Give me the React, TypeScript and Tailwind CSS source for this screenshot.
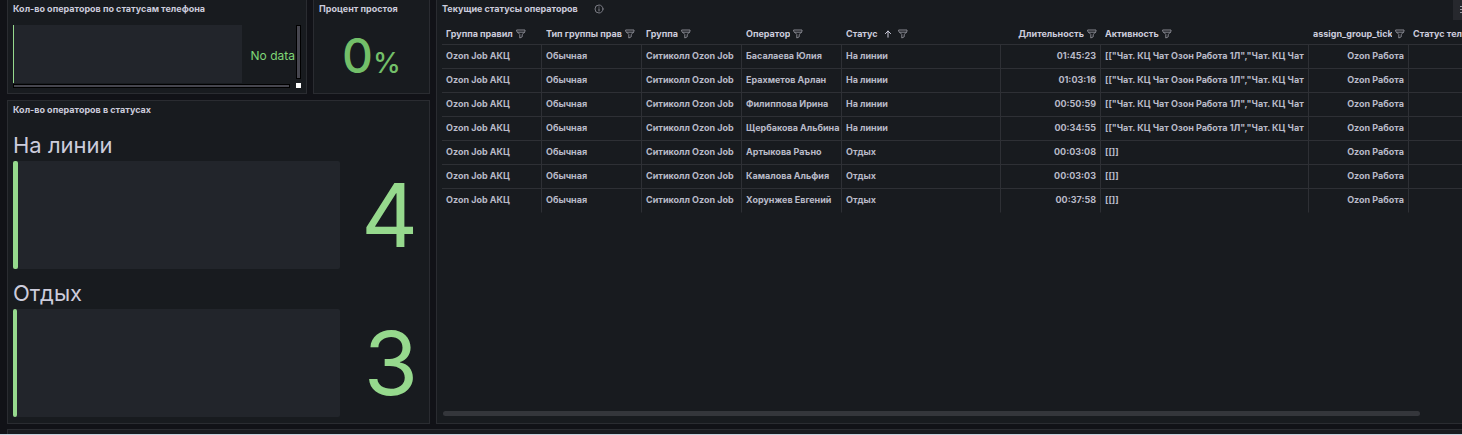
import type { ReactNode } from 'react';
import clsx from 'clsx';

type Column = {
  title: string;
  width: string;
  align?: 'right';
  sorted?: boolean;
};

const columns: Column[] = [
  { title: 'Группа правил', width: 'w-[100px]' },
  { title: 'Тип группы прав', width: 'w-[100px]' },
  { title: 'Группа', width: 'w-[100px]' },
  { title: 'Оператор', width: 'w-[100px]' },
  { title: 'Статус', width: 'w-[159px]', sorted: true },
  { title: 'Длительность', width: 'w-[100px]', align: 'right' },
  { title: 'Активность', width: 'w-[208px]' },
  { title: 'assign_group_ticket', width: 'w-[100px]', align: 'right' },
  { title: 'Статус телефона', width: 'w-[100px]' },
];

const chats = '[["Чат. КЦ Чат Озон Работа 1Л","Чат. КЦ Чат';

const operators = [
  { name: 'Басалаева Юлия', status: 'На линии', duration: '01:45:23', activity: chats },
  { name: 'Ерахметов Арлан', status: 'На линии', duration: '01:03:16', activity: chats },
  { name: 'Филиппова Ирина', status: 'На линии', duration: '00:50:59', activity: chats },
  { name: 'Щербакова Альбина', status: 'На линии', duration: '00:34:55', activity: chats },
  { name: 'Артыкова Раъно', status: 'Отдых', duration: '00:03:08', activity: '[[]]' },
  { name: 'Камалова Альфия', status: 'Отдых', duration: '00:03:03', activity: '[[]]' },
  { name: 'Хорунжев Евгений', status: 'Отдых', duration: '00:37:58', activity: '[[]]' },
];

const FilterIcon = () => (
  <svg viewBox="0 0 10 10" className="w-[10px] h-[10px]" fill="none" stroke="currentColor" strokeWidth="1" strokeLinejoin="round" strokeLinecap="round">
    <path d="M1 1h8v1.6L6.2 5.4v2.4L3.8 9V5.4L1 2.6z" />
    <path d="M1.4 3.2h7.2" />
  </svg>
);

const InfoIcon = () => (
  <svg viewBox="0 0 10 10" className="w-[10px] h-[10px]" fill="none" stroke="currentColor" strokeLinecap="round">
    <circle cx="5" cy="5" r="4" strokeWidth="0.9" />
    <path d="M5 4.8v2.2M5 3v0.2" strokeWidth="1" />
  </svg>
);

const ArrowUp = () => (
  <svg viewBox="0 0 8 8" className="w-2 h-2 shrink-0" fill="none" stroke="currentColor" strokeWidth="1" strokeLinecap="round" strokeLinejoin="round">
    <path d="M4 7.2V1M1.4 3.6L4 1l2.6 2.6" />
  </svg>
);

const Panel = ({ className, children }: { className?: string; children: ReactNode }) => (
  <section className={clsx('border border-[#2a2c31] bg-[#181b1f]', className)}>{children}</section>
);

const Title = ({ children }: { children: ReactNode }) => (
  <h2 className="text-[9px] leading-[18px] font-bold whitespace-nowrap">{children}</h2>
);

const Gauge = ({ label, value, fill }: { label: string; value: number; fill: string }) => (
  <div className="pt-[10px]">
    <h3 className="text-[22px] leading-7">{label}</h3>
    <div className="flex h-[108px] mt-[2px]">
      <div className="flex-1 rounded-xs bg-[#22252b]">
        <div className={clsx('h-full rounded-xs bg-[#96d98d]', fill)} />
      </div>
      <div className="w-[84px] pr-[6px] flex items-center justify-end text-[88px] leading-none text-[#96d98d]">{value}</div>
    </div>
  </div>
);

const StatusTable = () => (
  <table className="table-fixed border-separate border-spacing-0 w-[1067px] text-[9px] font-bold whitespace-nowrap">
    <thead>
      <tr className="h-[21px]">
        {columns.map((col) => (
          <th key={col.title} className={clsx('px-1 border-b border-[#2e3035]', col.width)}>
            <div className={clsx('flex items-center gap-[3px]', col.align === 'right' && 'justify-end')}>
              <span className="overflow-hidden">{col.title}</span>
              {col.sorted && <span className="px-[3px]"><ArrowUp /></span>}
              <button type="button" aria-label={`Фильтр: ${col.title}`} className="shrink-0 text-[#85868e]">
                <FilterIcon />
              </button>
            </div>
          </th>
        ))}
      </tr>
    </thead>
    <tbody className="text-[#b9bac8]">
      {operators.map((op) => (
        <tr key={op.name} className="h-6 *:px-1 *:pb-[2px] *:overflow-hidden *:border-r *:border-b *:border-[#2e3035] last:*:border-b-transparent">
          <td>Ozon Job АКЦ</td>
          <td>Обычная</td>
          <td>Ситиколл Ozon Job</td>
          <td>{op.name}</td>
          <td>{op.status}</td>
          <td className="text-right">{op.duration}</td>
          <td>{op.activity}</td>
          <td className="text-right">Ozon Работа</td>
          <td />
        </tr>
      ))}
    </tbody>
  </table>
);

export default function App() {
  return (
    <main className="bg-[#111217] text-[#ccccdc] font-['Inter',sans-serif] overflow-hidden border-b border-[#c5d0dc]">
      <div className="grid grid-cols-[423px_1fr] gap-[6px] pl-[7px]">
        <div className="flex flex-col gap-[6px]">
          <div className="grid grid-cols-[300px_1fr] gap-[6px]">
            <Panel className="border-t-0 px-[5px] pb-[5px]">
              <Title>Кол-во операторов по статусам телефона</Title>
              <div className="flex h-[58px] mt-[7px] items-stretch">
                <div className="w-[229px] bg-[#22252b] border-l border-[#96d98d]" />
                <div className="flex-1 flex items-center justify-end text-xs text-[#7fd676] pt-1 pr-px">No data</div>
                <div className="w-[5px] h-[54px] bg-[#46464f] border border-black" />
              </div>
              <div className="flex items-center justify-between">
                <div className="w-[277px] h-1 bg-[#46464f] border border-black" />
                <div className="w-[5px] h-[5px] bg-white" />
              </div>
            </Panel>
            <Panel className="border-t-0 px-[5px]">
              <Title>Процент простоя</Title>
              <p className="flex items-baseline justify-center pt-[14px] text-[48px] leading-[48px] font-medium text-[#73bf69]">
                0<span className="text-[28px]">%</span>
              </p>
            </Panel>
          </div>
          <Panel className="px-[5px] pb-[6px]">
            <Title>Кол-во операторов в статусах</Title>
            <div className="pt-[2px]">
              <Gauge label="На линии" value={4} fill="w-[5px]" />
              <Gauge label="Отдых" value={3} fill="w-1" />
            </div>
          </Panel>
        </div>
        <Panel className="relative min-w-0 flex flex-col border-t-0 border-r-0 pl-[5px] overflow-hidden">
          <div className="flex items-center gap-4">
            <Title>Текущие статусы операторов</Title>
            <span className="text-[#85868e]"><InfoIcon /></span>
          </div>
          <div className="mt-[6px] overflow-hidden">
            <StatusTable />
          </div>
          <div className="mt-auto mb-[7px] ml-px mr-[42px] h-[5px] rounded-full bg-[#34363b]" />
          <button type="button" aria-label="Меню" className="absolute top-0 right-0 w-[9px] h-5 overflow-hidden bg-[#26282d] text-[#9a9ba3]">
            <svg viewBox="0 0 9 20" className="w-[9px] h-5" stroke="currentColor">
              <path d="M7 6.5h2M7 9.5h2M7 12.5h2" />
            </svg>
          </button>
        </Panel>
      </div>
      <div className="mt-[5px] ml-[7px] h-[5px] border-t border-l border-[#2a2c31] bg-[#181b1f]" />
    </main>
  );
}
